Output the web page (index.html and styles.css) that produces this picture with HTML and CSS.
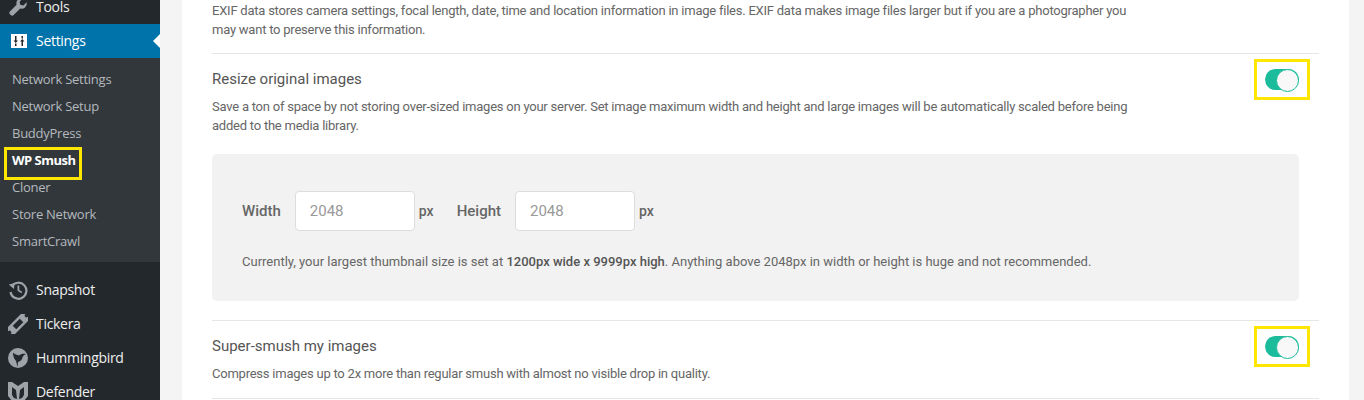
FILE: index.html
```html
<!DOCTYPE html>
<html lang="en">
<head>
<meta charset="utf-8">
<title>WP Smush settings</title>
<link rel="stylesheet" href="styles.css">
</head>
<body>
<div class="page">
  <nav class="sidebar">
    <a class="item">
      <svg class="icon" viewBox="0 0 20 20"><path fill="#9ea3a8" d="M18.600 5.200c.5 1.900-.1 3.900-1.600 5.200-1.300 1.200-3.100 1.500-4.700 1L5.600 18.100c-.8.800-2 .8-2.800 0l-.9-.9c-.8-.8-.8-2 0-2.800l6.700-6.700c-.5-1.600-.2-3.400 1-4.700C11 1.500 13 .9 14.900 1.400l-3.300 3.300.7 3.100 3.100.7 3.200-3.300z"/></svg>
      <span>Tools</span>
    </a>
    <a class="item current">
      <svg class="icon" viewBox="0 0 20 20"><path fill="#fff" d="M3 3h16v14H3z"/><path fill="#23282d" d="M7 5h1.500v4.500H10L7.750 12 5.500 9.500H7zM7 12.500h1.500V15H7zM13.500 5H15v2.500h-1.500zM14.250 8l2.250 2.500H15V15h-1.500v-4.500H12z"/></svg>
      <span>Settings</span>
    </a>
    <ul class="submenu">
      <li>Network Settings</li>
      <li>Network Setup</li>
      <li>BuddyPress</li>
      <li class="active"><span class="mark">WP Smush</span></li>
      <li>Cloner</li>
      <li>Store Network</li>
      <li>SmartCrawl</li>
    </ul>
    <a class="item after-sub">
      <svg class="icon" viewBox="0 0 20 20"><path fill="none" stroke="#9ea3a8" stroke-width="2.200" d="M3.600 6.500A8 8 0 1 1 2.500 12"/><path fill="#9ea3a8" d="M.8 4.500 6.500 3.200 6 9zM9.500 5.500h1.800v4.400l2.900 1.800-.9 1.500-3.800-2.400z"/></svg>
      <span>Snapshot</span>
    </a>
    <a class="item">
      <svg class="icon" viewBox="0 0 20 20"><g transform="rotate(-45 10 10)"><path fill="#9ea3a8" fill-rule="evenodd" d="M-2 5h24v3.200a1.800 1.800 0 0 0 0 3.600V15H-2v-3.200a1.800 1.800 0 0 0 0-3.600zM5 7.500v5h10v-5z"/></g></svg>
      <span>Tickera</span>
    </a>
    <a class="item">
      <svg class="icon" viewBox="0 0 20 20"><circle cx="10" cy="10" r="10" fill="#9ea3a8"/><path fill="#23282d" d="M5 4.500c2 2 4 2.300 6 3 1.500-1.500 4-2 7-1.500-2 1-3 2-3.500 3.500-.5 2.500-2.500 4-4.500 4.500L9.500 19 8 13c-2-2-3-5-3-8.500z"/></svg>
      <span>Hummingbird</span>
    </a>
    <a class="item">
      <svg class="icon" viewBox="0 0 20 20"><path fill="#9ea3a8" d="M0 0h4l6 4 6-4h4v14l-4 5-6 1-6-1-4-5z"/><path fill="#23282d" d="M4 5l4 3 1 9-3-1-2-3zM16 5l-4 3-1 9 3-1 2-3z"/></svg>
      <span>Defender</span>
    </a>
  </nav>
  <main class="card">
    <p class="desc intro">EXIF data stores camera settings, focal length, date, time and location information in image files. EXIF data makes image files larger but if you are a photographer you may want to preserve this information.</p>
    <section class="row first">
      <div class="row-text">
        <h2>Resize original images</h2>
        <p class="desc">Save a ton of space by not storing over-sized images on your server. Set image maximum width and height and large images will be automatically scaled before being added to the media library.</p>
      </div>
      <div class="mark-box"><span class="toggle"></span></div>
    </section>
    <div class="panel">
      <div class="fields">
        <label>Width</label><span class="input">2048</span><span class="unit">px</span>
        <label class="second">Height</label><span class="input">2048</span><span class="unit">px</span>
      </div>
      <p class="note">Currently, your largest thumbnail size is set at <b>1200px wide x 9999px high</b>. Anything above 2048px in width or height is huge and not recommended.</p>
    </div>
    <section class="row last">
      <div class="row-text">
        <h2>Super-smush my images</h2>
        <p class="desc">Compress images up to 2x more than regular smush with almost no visible drop in quality.</p>
      </div>
      <div class="mark-box"><span class="toggle"></span></div>
    </section>
  </main>
</div>
</body>
</html>
```
FILE: styles.css
```css
* { box-sizing: border-box; }
html, body { margin: 0; height: 400px; overflow: hidden; }
body { background: #f4f4f4; font-family: "Open Sans", sans-serif; }
.page { display: flex; height: 400px; overflow: hidden; }

.sidebar { width: 160px; flex: none; background: #23282d; margin-top: -10px; height: 410px; font-size: 14px; letter-spacing: -.3px; color: #eee; }
.item { display: flex; align-items: center; height: 34px; padding-left: 8px; gap: 8px; color: #eee; position: relative; }
.item span { line-height: 34px; }
.icon { width: 20px; height: 20px; flex: none; }
.current { background: #0073aa; color: #fff; }
.current::after { content: ""; position: absolute; right: 0; top: 10px; border: 7px solid transparent; border-left-width: 0; border-right-color: #fff; }
.submenu { list-style: none; margin: 0; padding: 8px 0 7px; background: #32373c; font-size: 13px; letter-spacing: -.25px; color: #b4b9be; height: 204px; }
.submenu li { height: 27px; line-height: 27px; padding-left: 12px; }
.submenu .active { color: #fff; font-weight: 700; letter-spacing: -.5px; }
.mark { position: relative; display: block; width: fit-content; }
.mark::after { content: ""; position: absolute; left: -8px; right: -6px; top: 0; height: 27px; border: 3px solid #ffe600; }
.after-sub { margin-top: 11px; }

.card { width: 1167px; margin-left: 22px; background: #fff; padding: 0 30px; font-family: Roboto, sans-serif; color: #666; height: 400px; overflow: hidden; }
.desc { margin: 0; font-size: 13px; line-height: 19px; letter-spacing: -.23px; color: #666; width: 925px; }
.intro { padding-top: 1px; padding-bottom: 14px; }
.row { display: flex; justify-content: space-between; width: 1107px; border-top: 1px solid #e6e6e6; }
.row.first { height: 101px; }
.row.last { height: 79px; border-bottom: 1px solid #e6e6e6; margin-top: 19px; }
.row-text { padding-top: 15px; }
h2 { margin: 0 0 8px; font-size: 15px; line-height: 20px; font-weight: 400; color: #555; letter-spacing: 0; }
.mark-box { width: 56px; height: 41px; border: 3px solid #ffe600; margin-right: 9px; margin-top: 5px; display: flex; align-items: center; justify-content: center; flex: none; }
.toggle { display: block; position: relative; width: 34px; height: 21px; border-radius: 11px; background: #1abc9c; }
.toggle::after { content: ""; position: absolute; right: 0; top: 0; width: 21px; height: 21px; border-radius: 50%; background: #f8f8f8; border: 1px solid #1abc9c; }
.panel { width: 1087px; height: 147px; background: #f2f2f2; border-radius: 5px; padding: 37px 30px 0; }
.fields { display: flex; align-items: center; height: 40px; font-size: 15px; font-weight: 500; color: #666; }
.input { width: 120px; height: 40px; margin-left: 14px; background: #fff; border: 1px solid #ddd; border-radius: 4px; padding-left: 14px; line-height: 38px; font-size: 15px; font-weight: 400; color: #999; }
.unit { margin-left: 4px; font-size: 14px; }
.second { margin-left: 23px; }
.note { margin: 22px 0 0; font-size: 13px; line-height: 18px; color: #666; }
.note b { font-weight: 500; color: #555; }
```
